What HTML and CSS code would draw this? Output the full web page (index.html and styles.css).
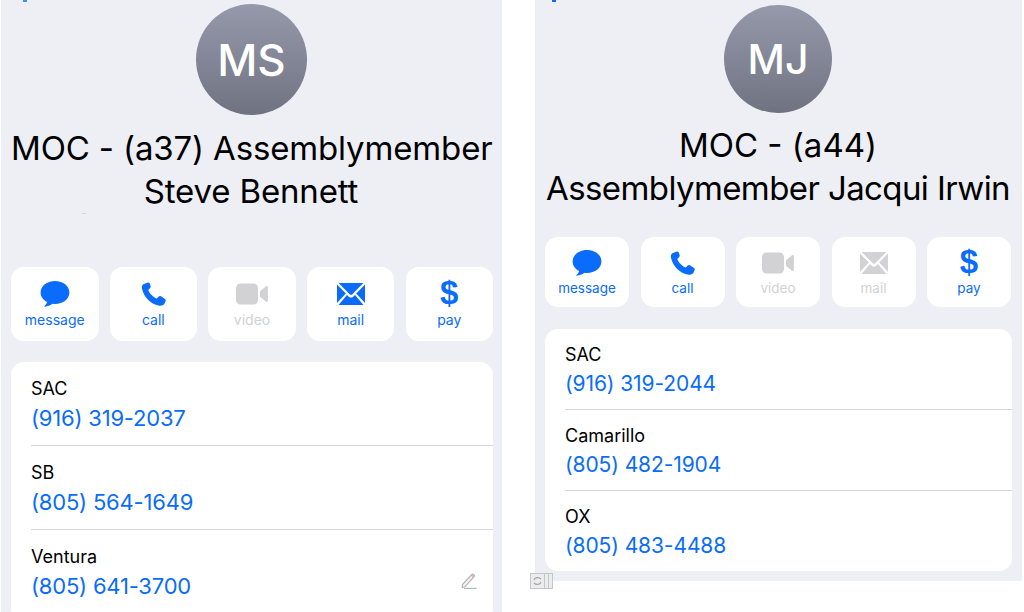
FILE: index.html
```html
<!DOCTYPE html>
<html lang="en">
<head>
  <meta charset="UTF-8">
  <title>Contacts</title>
  <link rel="stylesheet" href="styles.css">
</head>
<body>
  <svg class="defs" width="0" height="0" aria-hidden="true">
    <symbol id="i-message" viewBox="0 0 30 28">
      <path d="M15 1C6.900 1 .6 6.100.6 12.400c0 4 2.600 7.500 6.500 9.500-.4 1.500-1.400 3-2.700 4.200-.3.300 0 .7.400.6 2.800-.3 5.800-1.500 7.800-3 .8.100 1.600.2 2.400.2 8.100 0 14.400-5.100 14.400-11.500S23.100 1 15 1z"/>
    </symbol>
    <symbol id="i-call" viewBox="0 0 26 26">
      <path d="M6.700 1.200 3 2.700C1 3.600.6 5.600 1.100 7.800c1.400 5.600 4.200 9.500 7.300 12.300 3 2.800 6.500 4.700 10.900 5 2.300.2 4.200-.6 5.200-2.300l1.100-2.500c.3-.8.100-1.500-.6-2l-4.300-2.900c-.8-.5-1.500-.4-2.200.2l-1.900 1.800c-.4.300-.8.300-1.200.1-1.500-.8-3.300-2.200-4.600-3.600-1.300-1.300-2.400-2.900-3-4.300-.2-.4-.1-.8.200-1.200l1.600-1.700c.6-.7.700-1.400.3-2.200L9.100 2c-.5-.9-1.400-1.200-2.400-.8z"/>
    </symbol>
    <symbol id="i-video" viewBox="0 0 32 22">
      <rect x="0" y="0.500" width="22" height="21" rx="4.500"/>
      <path d="M24 8.200 30 3.300c.8-.6 1.900-.1 1.900.9v13.600c0 1-1.100 1.500-1.900.9l-6-4.900z"/>
    </symbol>
    <symbol id="i-mail" viewBox="0 0 28 22">
      <path d="M1.600 0h24.800L15.300 11.200c-.8.700-1.800.7-2.600 0z"/>
      <path d="M0 1.500 8.800 10.500 0 20z"/>
      <path d="M28 1.500 19.200 10.500 28 20z"/>
      <path d="M1.500 22 10 12l1.800 1.700c1.300 1.200 3.100 1.200 4.400 0L18 12l8.500 10z"/>
    </symbol>
  </svg>

  <section class="panel panel-left">
    <i class="back-tip"></i>
    <div class="avatar">MS</div>
    <h1 class="name">MOC - (a37) Assemblymember<br>Steve Bennett</h1>
    <i class="speck"></i>
    <div class="actions">
      <div class="action">
        <svg class="icon icon-message"><use href="#i-message"/></svg>
        <span>message</span>
      </div>
      <div class="action">
        <svg class="icon icon-call"><use href="#i-call"/></svg>
        <span>call</span>
      </div>
      <div class="action off">
        <svg class="icon icon-video"><use href="#i-video"/></svg>
        <span>video</span>
      </div>
      <div class="action">
        <svg class="icon icon-mail"><use href="#i-mail"/></svg>
        <span>mail</span>
      </div>
      <div class="action">
        <b class="icon icon-pay">$</b>
        <span>pay</span>
      </div>
    </div>
    <div class="card">
      <div class="row">
        <div class="row-label">SAC</div>
        <div class="row-phone">(916) 319-2037</div>
      </div>
      <div class="row">
        <div class="row-label">SB</div>
        <div class="row-phone">(805) 564-1649</div>
      </div>
      <div class="row">
        <div class="row-label">Ventura</div>
        <div class="row-phone">(805) 641-3700</div>
        <svg class="pencil" viewBox="0 0 16 16" width="16" height="16">
          <path d="M1.500 11.500 10.800 1.500c.5-.5 1.200-.5 1.700-.1l.5.4c.5.500.5 1.200.1 1.700L3.900 13.800 1.200 14.500z" fill="#f4f4f6" stroke="#b5b5ba" stroke-width="1.200"/>
          <path d="M10.500 1.800 13 4" stroke="#e3acac" stroke-width="1.800" fill="none"/>
          <path d="M3 15.400h12.500" stroke="#b5b5ba" stroke-width="1.200"/>
        </svg>
      </div>
    </div>
  </section>

  <section class="panel panel-right">
    <i class="back-tip"></i>
    <div class="avatar">MJ</div>
    <h1 class="name">MOC - (a44)<br><span class="name-long">Assemblymember Jacqui Irwin</span></h1>
    <div class="actions">
      <div class="action">
        <svg class="icon icon-message"><use href="#i-message"/></svg>
        <span>message</span>
      </div>
      <div class="action">
        <svg class="icon icon-call"><use href="#i-call"/></svg>
        <span>call</span>
      </div>
      <div class="action off">
        <svg class="icon icon-video"><use href="#i-video"/></svg>
        <span>video</span>
      </div>
      <div class="action off">
        <svg class="icon icon-mail"><use href="#i-mail"/></svg>
        <span>mail</span>
      </div>
      <div class="action">
        <b class="icon icon-pay">$</b>
        <span>pay</span>
      </div>
    </div>
    <div class="card">
      <div class="row">
        <div class="row-label">SAC</div>
        <div class="row-phone">(916) 319-2044</div>
      </div>
      <div class="row">
        <div class="row-label">Camarillo</div>
        <div class="row-phone">(805) 482-1904</div>
      </div>
      <div class="row">
        <div class="row-label">OX</div>
        <div class="row-phone">(805) 483-4488</div>
      </div>
    </div>
  </section>

  <svg class="stack-mark" viewBox="0 0 23 16" width="23" height="16">
    <g fill="#ececee" stroke="#c6c6c8" stroke-width="1">
      <rect x="16.500" y="0.500" width="6" height="15"/>
      <rect x="11.500" y="0.500" width="7" height="15"/>
      <rect x="0.500" y="0.500" width="14" height="15"/>
    </g>
    <path d="M4 7c1-3 5-3 7-1M11 9c-1 3-5 3-7 1" fill="none" stroke="#a4a4a6" stroke-width="1.200"/>
  </svg>
</body>
</html>
```

FILE: styles.css
```css
html, body {
  margin: 0;
  height: 612px;
  overflow: hidden;
  background: #ffffff;
}

body {
  display: flex;
  align-items: flex-start;
  font-family: Inter, "Liberation Sans", sans-serif;
  color: #000000;
  position: relative;
}

.defs {
  position: absolute;
}

.panel {
  position: relative;
  overflow: hidden;
  background: #eeeff5;
  box-sizing: border-box;
}

.panel-left {
  width: 501px;
  height: 612px;
  margin-left: 1px;
  padding: 4px 9px 0 10px;
}

.panel-right {
  width: 487px;
  height: 581px;
  margin-left: 33px;
  padding: 5px 10px 0 10px;
}

.back-tip {
  position: absolute;
  top: 0;
  left: 22px;
  width: 4px;
  height: 2px;
  background: #3f8dfb;
}

.panel-right .back-tip {
  left: 17px;
  background: #0a6cfa;
}

.speck {
  position: absolute;
  top: 213px;
  left: 81px;
  width: 4px;
  height: 1px;
  background: #cfd6e2;
}

.avatar {
  display: flex;
  align-items: center;
  justify-content: center;
  border-radius: 50%;
  background: linear-gradient(#9599ab, #6f7381);
  color: #ffffff;
  font-weight: 500;
}

.panel-left .avatar {
  width: 111px;
  height: 111px;
  margin-left: 185px;
  font-size: 44px;
}

.panel-right .avatar {
  width: 108px;
  height: 108px;
  margin-left: 179px;
  font-size: 41px;
}

.name {
  margin: 0;
  text-align: center;
  font-weight: 400;
  font-size: 33px;
  line-height: 43px;
  white-space: nowrap;
}

.panel-left .name {
  padding-top: 12px;
  padding-right: 2px;
  letter-spacing: -0.15px;
}

.panel-right .name {
  padding-top: 11px;
  padding-right: 1px;
}

.name-long {
  letter-spacing: -0.6px;
}

.actions {
  display: flex;
  justify-content: space-between;
}

.panel-left .actions {
  margin-top: 54px;
}

.panel-right .actions {
  margin-top: 27px;
  margin-right: 1px;
}

.action {
  display: flex;
  flex-direction: column;
  align-items: center;
  background: #ffffff;
  border-radius: 13px;
  color: #0a6cfa;
  box-sizing: border-box;
}

.panel-left .action {
  width: 87.5px;
  height: 74px;
  padding-top: 13px;
  font-size: 14px;
}

.panel-right .action {
  width: 84px;
  height: 70px;
  padding-top: 12px;
  font-size: 13.5px;
}

.action.off {
  color: #d2d2d4;
}

.icon {
  display: block;
  height: 28px;
  fill: currentColor;
}

.icon-message {
  width: 30px;
}

.icon-call {
  width: 25px;
}

.icon-video {
  width: 32px;
}

.icon-mail {
  width: 28px;
}

.icon-pay {
  font-family: "Liberation Sans", sans-serif;
  font-size: 33px;
  font-weight: 700;
  line-height: 26px;
}

.action span {
  line-height: 17px;
}

.panel-left .action span {
  margin-top: 3px;
}

.panel-right .action span {
  margin-top: 3px;
}

.card {
  background: #ffffff;
  border-radius: 13px;
}

.panel-left .card {
  margin-top: 21px;
  height: 260px;
}

.panel-right .card {
  margin-top: 22px;
  height: 242px;
}

.row {
  position: relative;
  box-sizing: border-box;
  margin-left: 20px;
  border-bottom: 1px solid #d6d6d9;
}

.row:last-child {
  border-bottom: none;
}

.panel-left .row {
  height: 84px;
  padding-top: 16px;
}

.panel-right .row {
  height: 81px;
  padding-top: 15px;
}

.row-label {
  font-size: 18px;
  line-height: 22px;
}

.row-phone {
  color: #0a6cfa;
  line-height: 26px;
}

.panel-left .row-phone {
  margin-top: 5px;
  font-size: 22px;
  letter-spacing: -0.2px;
}

.panel-right .row-phone {
  margin-top: 5px;
  font-size: 21px;
  letter-spacing: -0.1px;
}

.pencil {
  position: absolute;
  top: 43px;
  right: 16px;
}

.stack-mark {
  position: absolute;
  top: 573px;
  left: 530px;
}
```
